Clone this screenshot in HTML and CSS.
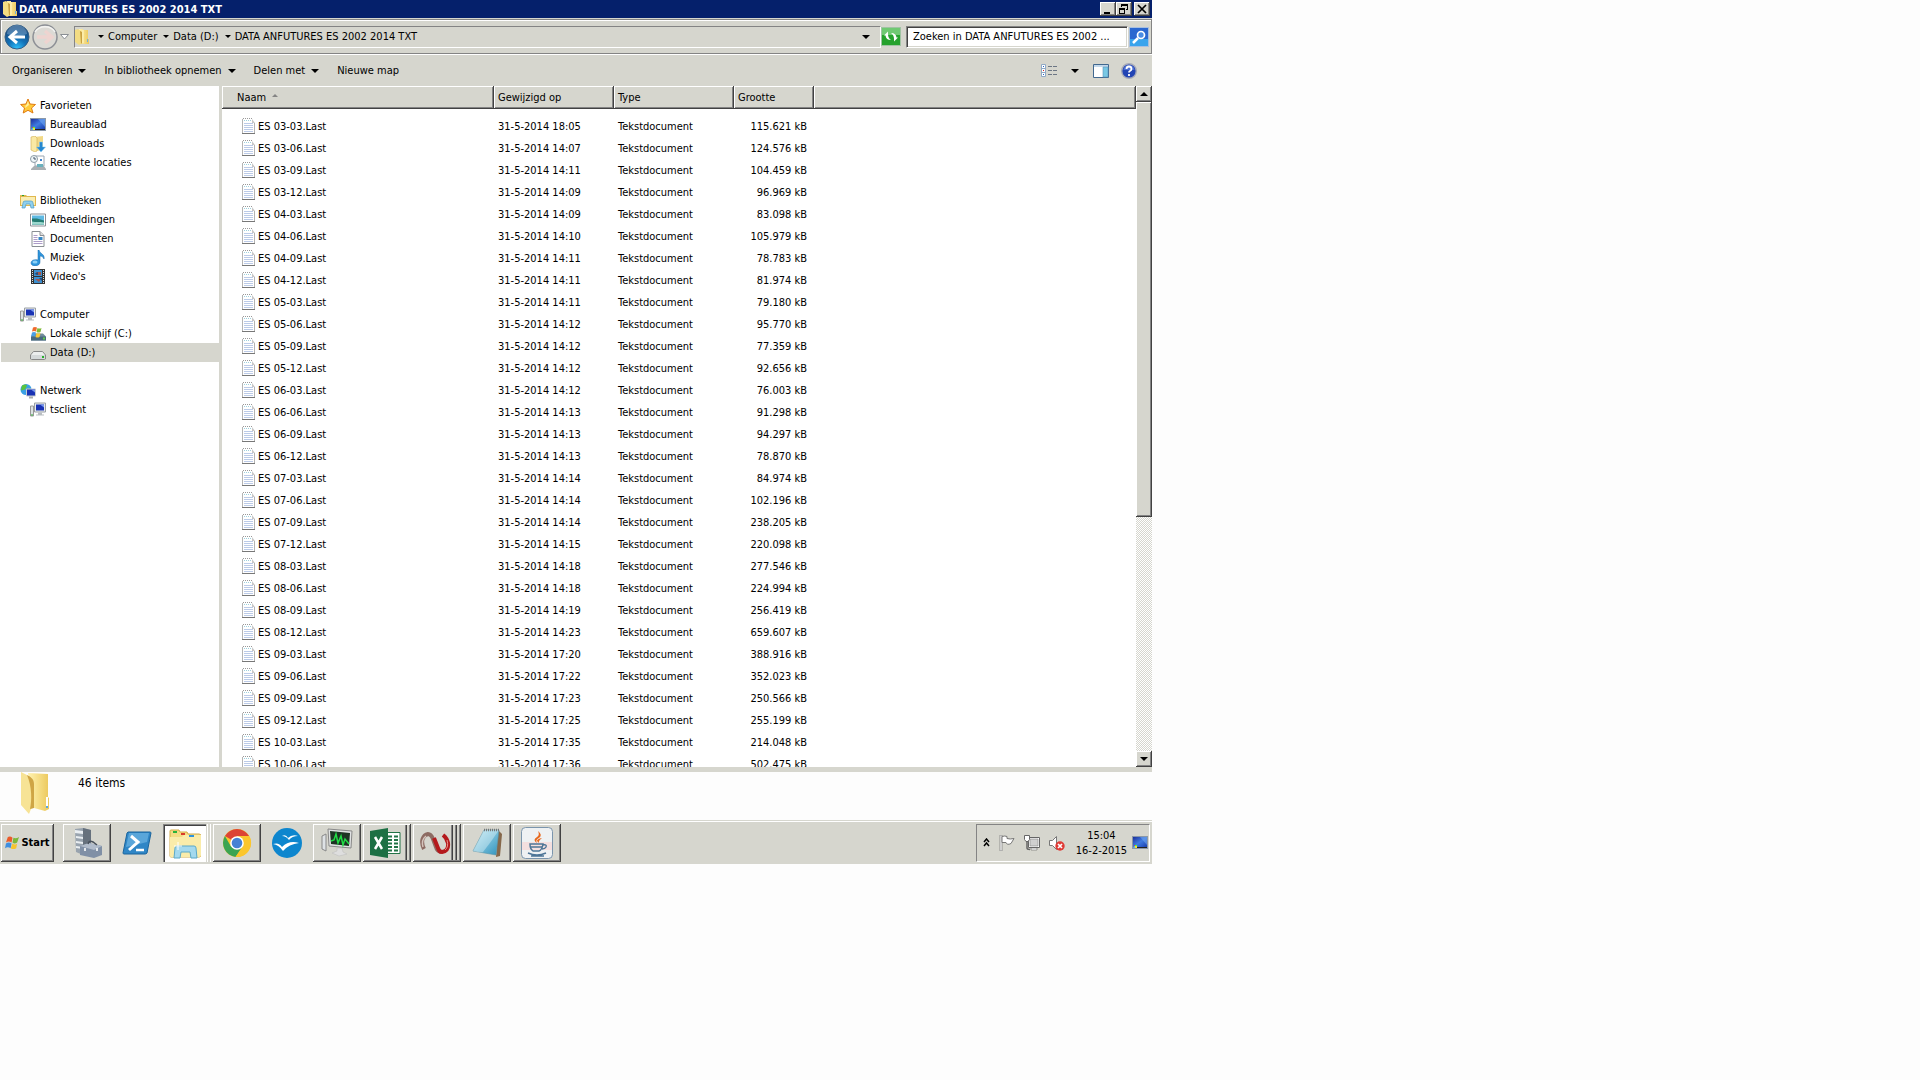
FILE: index.html
```
<!DOCTYPE html>
<html lang="nl">
<head>
    <meta charset="UTF-8">
    <title>DATA ANFUTURES ES 2002 2014 TXT</title>
    <link rel="stylesheet" href="styles.css">
</head>
<body>
<svg class="defs" aria-hidden="true">
    <defs>
        <linearGradient id="gBlue" x1="0" y1="0" x2="1" y2="1"><stop offset="0" stop-color="#1c2f9c"/><stop offset=".5" stop-color="#3f7be0"/><stop offset="1" stop-color="#1a3fb0"/></linearGradient>
        <linearGradient id="gFolder" x1="0" y1="0" x2="1" y2="0"><stop offset="0" stop-color="#fff3b0"/><stop offset="1" stop-color="#ecc85c"/></linearGradient>
        <radialGradient id="gBack" cx=".5" cy="1" r=".9"><stop offset="0" stop-color="#2fc4ff"/><stop offset=".45" stop-color="#1272b8"/><stop offset="1" stop-color="#1b4a7c"/></radialGradient>
        <linearGradient id="gGlass" x1="0" y1="0" x2="1" y2="1"><stop offset="0" stop-color="#bfe8f5"/><stop offset="1" stop-color="#2e93bd"/></linearGradient>
    </defs>
    <symbol id="folder" viewBox="0 0 28 42">
        <path d="M7 1l20 1v23l1 1v11l-4 2-11-3z" fill="url(#gFolder)"/>
        <path d="M0 0l6 3 4 4 2 29-2 1-2 5-8-9z" fill="#f7e395"/>
        <path d="M6 3c4 2 7 4 7 9v24l-4 1c2-9 2-22-3-34z" fill="#cfa545"/>
        <path d="M25 25h2v9h-2z" fill="#fff"/><path d="M25 34h2v2h-2z" fill="#5aa6e0"/>
    </symbol>
    <symbol id="folder-s" viewBox="0 0 14 16">
        <path d="M4 0h4v1h5v9h1v5H5z" fill="url(#gFolder)"/>
        <path d="M0 1l3-1 3 2v13l-2 1-4-3z" fill="#f3dc82"/><path d="M5 2l2 1v11l-1 1z" fill="#c9a040"/><path d="M8 1v13" stroke="#fff6c4"/>
        <path d="M12 10h1v3h-1z" fill="#6fb1e0"/>
    </symbol>
    <symbol id="doc" viewBox="0 0 13 16">
        <path d="M0 1h10l3 3v12H0z" fill="#fff"/>
        <path d="M.5 1v14M12.500 5v10" stroke="#b4b4b4"/>
        <path d="M1 .5h10" stroke="#999" stroke-dasharray="1 1"/><path d="M2 2.500h8" stroke="#9ed0dc" stroke-dasharray="1 1"/>
        <path d="M10 1l3 4h-3z" fill="#c8c8c8"/>
        <path d="M2 5.500h9M2 7.500h9M2 9.500h9M2 11.500h9M2 13.500h9" stroke="#bccbe8"/>
        <path d="M0 15.500h13" stroke="#777"/>
    </symbol>
    <symbol id="star" viewBox="0 0 16 16"><path d="M8 1l2 5 5.500.5-4 3.500 1.500 5L8 12.300 3.200 15l1.300-5L.6 6.500 6 6z" fill="#ffcb3a" stroke="#e07a10"/><path d="M8 3l1 4-4 3 .8-3L3 7h3.500z" fill="#fff0a0"/></symbol>
    <symbol id="desktop" viewBox="0 0 16 14"><path d="M0 0h16v13H0z" fill="#8b98a8"/><path d="M1 1h14v10H1z" fill="url(#gBlue)"/><path d="M5 11h10v1H5z" fill="#222"/><path d="M8 1h7v8z" fill="#7ab0f4" opacity=".5"/><path d="M2 9h1v1H2z" fill="#f33"/><path d="M3 9h2v1H3z" fill="#4f4"/><path d="M2 10h1v2H2z" fill="#3cf"/><path d="M3 10h2v2H3z" fill="#fd3"/></symbol>
    <symbol id="downloads" viewBox="0 0 16 16"><path d="M4 1l9-1v14l-7 1z" fill="#f2d987"/><path d="M1 1l4-1 2 2v13l-2 1-4-2z" fill="#fae9a4" stroke="#d0ac50" stroke-width=".6"/><path d="M9.500 6h3v5h3l-4.500 5-4.500-5h3z" fill="#2586d0" stroke="#7fc8f4" stroke-width=".5"/></symbol>
    <symbol id="recent" viewBox="0 0 16 16"><path d="M5 1h9v10H5z" fill="#fff" stroke="#9aa6b2"/><path d="M1 14l3-3h10l2 3v1H1z" fill="#a9afb3"/><path d="M7 9h6v3H7z" fill="#6ab1bd"/><path d="M10 4h2v2h-2z" fill="#3e83d0"/><circle cx="4" cy="4" r="3.500" fill="#eef5f8" stroke="#8d9ba5"/><path d="M4 2v2h2" fill="none" stroke="#456"/></symbol>
    <symbol id="library" viewBox="0 0 16 14"><path d="M0 1h6l1 1h9v10H0z" fill="#e0b84e"/><path d="M1 3h14v8H1z" fill="#faedb2"/><path d="M2 1h2v1H2z" fill="#28a030"/><path d="M2 14l1-5q0-2 2-2h6q2 0 2 2l1 5h-3l-1-4H6l-1 4z" fill="#8ed0ef" stroke="#4d9bc8" stroke-width=".7"/></symbol>
    <symbol id="pictures" viewBox="0 0 16 13"><path d="M.5.5h15v12H.5z" fill="#fff" stroke="#8a8f94"/><path d="M2 2h12v9H2z" fill="#5fb9e2"/><path d="M2 5h5l7 2v4H2z" fill="#267d72"/><path d="M2 8c4 1 7 0 12 1v2H2z" fill="#9bd8ce"/></symbol>
    <symbol id="documents" viewBox="0 0 13 16"><path d="M.5.5h8l4 4v11H.5z" fill="#fff" stroke="#8a8f94"/><path d="M8.500.5v4h4" fill="#ddd" stroke="#8a8f94"/><path d="M2 4.500h4M2 6.500h4M2 8.500h4M2 10.500h9M2 12.500h9" stroke="#ad9cc9"/><path d="M7 6h4v3H7z" fill="#3486c4"/></symbol>
    <symbol id="music" viewBox="0 0 14 16"><path d="M8 0c1 4 6 4 5 9-1-2-2-3-4-3v6c0 5-9 5-9 1 0-3 4-4 7-3V0z" fill="#2f96dc" stroke="#1868ac" stroke-width=".5"/><ellipse cx="4" cy="12" rx="2.500" ry="1.500" fill="#8cd1f7"/></symbol>
    <symbol id="video" viewBox="0 0 14 16"><path d="M0 0h14v15H0z" fill="#333"/><path d="M1.500 1v14M12.500 1v14" stroke="#ddd" stroke-dasharray="1 1"/><path d="M3 1h8v6H3zM3 8h8v6H3z" fill="#3c90d0"/><path d="M5 3h5v3H5zM4 10h6l-2 3z" fill="#a4584c"/><path d="M3 5l4-2v3zM8 9h3v3z" fill="#1a4e83"/></symbol>
    <symbol id="computer" viewBox="0 0 16 15"><path d="M.5 3.500h3v10h-3z" fill="#dde2e4" stroke="#999"/><path d="M1 12h2v1H1z" fill="#3a3"/><path d="M4.500.5h11v9h-11z" fill="#e8ebed" stroke="#9aa0a5"/><path d="M6 2h8v6H6z" fill="#1932b4"/><path d="M10 2h4v3z" fill="#7797ee"/><path d="M8 10h4v2h2v1H6v-1h2z" fill="#b8bdc1"/></symbol>
    <symbol id="drive-c" viewBox="0 0 16 15"><path d="M1 10l2-3h10l3 3v4H1z" fill="#728c9c"/><path d="M1 10h15v4H1z" fill="#48697e"/><path d="M13 11h2v2h-2z" fill="#5ed14a"/><path d="M3 1q2-1 4 0L6 5q-2-1-4 0z" fill="#ef6a2c"/><path d="M7.500 1.500q2 1 4 0l-1 4q-2 1-4 0z" fill="#7fba35"/><path d="M2 6q2-1 4 0l-1 4q-2-1-4 0z" fill="#4a9fe3"/><path d="M6.500 6.500q2 1 4 0l-1 4q-2 1-4 0z" fill="#f9c834"/></symbol>
    <symbol id="drive-d" viewBox="0 0 16 9"><path d="M.5 4l3-3.500h9l3 3.500v4l-1 .5h-13l-1-.5z" fill="#eceeee" stroke="#888"/><path d="M1 4h14v4H1z" fill="#d5d9da"/><path d="M12 5h2v2h-2z" fill="#29b02b"/></symbol>
    <symbol id="network" viewBox="0 0 16 15"><circle cx="6" cy="6" r="5.500" fill="#3aa0e6"/><path d="M2 2q4-2 5 0L5 6 1 7zM7 5h3L6 11z" fill="#5ac43c"/><path d="M6.500 5.500h9v7h-9z" fill="#1932b4" stroke="#c8ccd0"/><path d="M11 6h4v3z" fill="#7797ee"/><path d="M9 13h4v2H9z" fill="#a8adb1"/></symbol>
    <symbol id="flag4" viewBox="0 0 16 15"><path d="M3 1q3-1 5 1L7 7Q4 5 1 7z" fill="#ea5b2a"/><path d="M9 2q3 1 6-1l-2 6q-3 2-5 0z" fill="#7cb83a"/><path d="M1 8q3-2 6 0l-1 5q-3-2-6 0z" fill="#3f8fe0"/><path d="M8 8q3 2 5 0l-1 5q-3 2-6 0z" fill="#f7c42e"/></symbol>
</svg>

<div class="screen">
    <main class="window">
        <header class="titlebar">
            <svg class="title-icon"><use href="#folder-s"/></svg>
            <h1>DATA ANFUTURES ES 2002 2014 TXT</h1>
            <button class="win-btn" aria-label="Minimaliseren"><svg width="12" height="10"><path d="M2 8h6v2H2z"/></svg></button>
            <button class="win-btn" aria-label="Verkleinen"><svg width="12" height="10"><path d="M3 0h7v6H8V5h1V2H4v1H3zM1 4h6v6H1zM2 6v3h4V6z" fill-rule="evenodd"/></svg></button>
            <button class="win-btn close" aria-label="Sluiten"><svg width="12" height="10"><path d="M2 1l8 8M10 1L2 9" stroke="#000" stroke-width="1.700"/></svg></button>
        </header>

        <div class="addressbar">
            <button class="nav-btn" aria-label="Vorige"><svg width="26" height="26"><circle cx="13" cy="13" r="12" fill="url(#gBack)" stroke="#355f86"/><path d="M3 10a10 9 0 0 1 20 0q-10 4-20 0z" fill="#8fb4d6" opacity=".45"/><path d="M13 7l-7 6 7 6M7 13h14" fill="none" stroke="#fff" stroke-width="3"/></svg></button>
            <button class="nav-btn" aria-label="Volgende"><svg width="26" height="26"><circle cx="13" cy="13" r="12" fill="#dcdad5" stroke="#8d9096" stroke-width="1.500"/><path d="M13 7l7 6-7 6M19 13H5" fill="none" stroke="#eed4d0" stroke-width="3.500"/><path d="M3 8a11 9 0 0 1 20 0" fill="none" stroke="#f4f4f2" stroke-width="1.500"/></svg></button>
            <button class="history" aria-label="Recente pagina's"><svg width="9" height="6"><path d="M.5.5h8l-4 4.500z" fill="#fff" stroke="#8a8f94"/></svg></button>
            <nav class="breadcrumb">
                <svg class="crumb-icon"><use href="#folder-s"/></svg>
                <i class="arrow"></i>
                <a href="#">Computer</a><i class="arrow"></i>
                <a href="#">Data (D:)</a><i class="arrow"></i>
                <a href="#">DATA ANFUTURES ES 2002 2014 TXT</a>
                <button class="plain drop" aria-label="Vorige locaties"><i class="arrow big"></i></button>
            </nav>
            <button class="plain refresh" aria-label="Vernieuwen"><svg width="20" height="19"><path d="M.5.5h19v18H.5z" fill="#26a22d" stroke="#9fc3a2"/><path d="M1 1h18v7H1z" fill="#6fc972"/><path d="M3 8.500l4-4v2.500q0 4 3 6-5 0-5.500-4.500zM17 10.500l-4 4V12q0-4-3-6 5 0 5.500 4.500z" fill="#fff"/></svg></button>
            <input class="search" type="text" aria-label="Zoeken" value="Zoeken in DATA ANFUTURES ES 2002 ...">
            <button class="plain" aria-label="Zoeken"><svg width="20" height="20"><path d="M.5.5h19v19H.5z" fill="#2b68d0" stroke="#a8c0e0"/><path d="M1 12h18v7H1z" fill="#39a4ec"/><circle cx="12" cy="8" r="3.500" fill="#4a8ce4" stroke="#fff" stroke-width="1.700"/><path d="M9 11l-5 5" stroke="#fff" stroke-width="2.500"/></svg></button>
        </div>

        <div class="toolbar">
            <button class="plain">Organiseren <i class="arrow big"></i></button>
            <button class="plain">In bibliotheek opnemen <i class="arrow big"></i></button>
            <button class="plain">Delen met <i class="arrow big"></i></button>
            <button class="plain">Nieuwe map</button>
            <div class="tools">
                <button class="plain view" aria-label="Weergave"><svg width="16" height="14"><path d="M.5.5h4v12h-4z" fill="#fff" stroke="#8fa9c6"/><path d="M0 4.500h5M0 8.500h5" stroke="#8fa9c6"/><path d="M2 2h1v1H2zM2 10h1v1H2z" fill="#26c"/><path d="M2 6h1v1H2z" fill="#c22"/><path d="M7 2.500h9M7 6.500h9M7 10.500h9" stroke="#6c7684" stroke-dasharray="4 1"/></svg><i class="arrow big"></i></button>
                <button class="plain" aria-label="Voorbeeldvenster"><svg width="16" height="14"><path d="M.5.5h15v13H.5z" fill="#fff" stroke="#41688f"/><path d="M1 1h14v2H1z" fill="#c3d8ea"/><path d="M10 3h5v10h-5z" fill="#78c8e4" stroke="#5a94b8" stroke-width=".6"/></svg></button>
                <button class="plain" aria-label="Help"><svg width="16" height="16"><circle cx="8" cy="8" r="7.300" fill="#2244b4" stroke="#a5a9b8" stroke-width="1.400"/><path d="M2.500 7a5.500 5 0 0 1 11 0z" fill="#6c90e8" opacity=".6"/><path d="M5.500 6q0-2.500 2.500-2.500T10.500 6q0 1-1.300 1.700Q8 8.300 8 9.500M8 11v2" fill="none" stroke="#fff" stroke-width="1.800"/></svg></button>
            </div>
        </div>

        <div class="content">
            <nav class="sidebar">
                <ul>
                    <li><a class="head" href="#"><svg><use href="#star"/></svg>Favorieten</a></li>
                    <li><a href="#"><svg><use href="#desktop"/></svg>Bureaublad</a></li>
                    <li><a href="#"><svg><use href="#downloads"/></svg>Downloads</a></li>
                    <li><a href="#"><svg><use href="#recent"/></svg>Recente locaties</a></li>
                </ul>
                <ul>
                    <li><a class="head" href="#"><svg><use href="#library"/></svg>Bibliotheken</a></li>
                    <li><a href="#"><svg><use href="#pictures"/></svg>Afbeeldingen</a></li>
                    <li><a href="#"><svg><use href="#documents"/></svg>Documenten</a></li>
                    <li><a href="#"><svg><use href="#music"/></svg>Muziek</a></li>
                    <li><a href="#"><svg><use href="#video"/></svg>Video's</a></li>
                </ul>
                <ul>
                    <li><a class="head" href="#"><svg><use href="#computer"/></svg>Computer</a></li>
                    <li><a href="#"><svg><use href="#drive-c"/></svg>Lokale schijf (C:)</a></li>
                    <li><a class="selected" href="#"><svg class="low"><use href="#drive-d"/></svg>Data (D:)</a></li>
                </ul>
                <ul>
                    <li><a class="head" href="#"><svg><use href="#network"/></svg>Netwerk</a></li>
                    <li><a href="#"><svg><use href="#computer"/></svg>tsclient</a></li>
                </ul>
            </nav>

            <section class="files">
                <table>
                    <colgroup><col class="c-name"><col class="c-date"><col class="c-type"><col class="c-size"><col></colgroup>
                    <thead>
                        <tr><th>Naam <i class="sort"></i></th><th>Gewijzigd op</th><th>Type</th><th>Grootte</th><th></th></tr>
                    </thead>
                    <tbody id="rows"></tbody>
                </table>
            </section>

            <div class="scrollbar">
                <button class="scroll-btn" aria-label="Omhoog"><i class="arrow big up"></i></button>
                <div class="track"><div class="thumb"></div></div>
                <button class="scroll-btn" aria-label="Omlaag"><i class="arrow big"></i></button>
            </div>
        </div>

        <footer class="details">
            <svg class="details-icon"><use href="#folder"/></svg>
            <p>46 items</p>
        </footer>
    </main>

    <div class="taskbar">
        <button class="start"><svg><use href="#flag4"/></svg>Start</button>
        <div class="tasks">
            <button class="task" aria-label="Serverbeheer"><svg viewBox="0 0 32 32"><path d="M4 2l8-1 8 2v22l-8 3-7-3z" fill="#98a3ae"/><path d="M12 1l8 2v22l-8 3z" fill="#66717d"/><path d="M4 3l8 1v3L4 6zM5 9l7 1v2L5 11zM5 14l7 1v2l-7-1zM5 19l7 1v2l-7-1z" fill="#e9eef2"/><path d="M9 19l9-3 13 3v9l-8 3-14-3z" fill="#8090a6"/><path d="M9 19l9-3 13 3-8 4z" fill="#b1bccb"/><path d="M17 17q1-4 5-2l4 3" fill="none" stroke="#48515c" stroke-width="1.500"/><path d="M14 21v3M26 21v3" stroke="#e4e8ec" stroke-width="2"/></svg></button>
            <button class="task flat" aria-label="PowerShell"><svg viewBox="0 0 32 32"><path d="M7 5h22q1 0 1 1l-4 20q-1 1-2 1H3q-1 0-1-1L6 6z" fill="#2f86c6" stroke="#1b659d"/><path d="M8 6h20l-2 9Q15 18 5 20z" fill="#78bce8" opacity=".6"/><path d="M10 9l7 6-9 8" fill="none" stroke="#fff" stroke-width="3"/><path d="M15 23h8" stroke="#fff" stroke-width="2.500"/></svg></button>
            <button class="task stack-1 pressed" aria-label="Verkenner"><svg viewBox="0 0 32 32"><path d="M1 4q0-1 1-1h8l1 2h7l1 2h11q2 0 2 2v19q0 2-2 2H2q-1 0-1-1z" fill="#f4dc84" stroke="#d2ab49"/><path d="M1 10h12l2-2h17v20q0 2-2 2H2q-1 0-1-1z" fill="#faecaa"/><path d="M4 4h4v2H4z" fill="#29b33b"/><path d="M12 6h4v2h-4z" fill="#da3a2c"/><path d="M20 8h5v2h-5z" fill="#2f93dd"/><path d="M5 31l1-10q0-2 2-2h17q2 0 2 2l1 10h-6l-1-6h-9l-1 6z" fill="#a4d9ee" stroke="#5ba9c9"/><path d="M9 15v8M5 19h8" stroke="#fff"/></svg></button>
            <button class="task" aria-label="Chrome"><svg viewBox="0 0 32 32"><circle cx="16" cy="16" r="14" fill="#fbc62d"/><path d="M16 16L3.900 9A14 14 0 0 1 28.100 9H16z" fill="#dc4335"/><path d="M16 16l-6 3.500L3.900 9a14 14 0 0 0 10.600 20.900L22 19z" fill="#3ba452"/><path d="M16 9h12.100a14 14 0 0 1-13.600 20.900L22 19z" fill="#fbc62d"/><circle cx="16" cy="16" r="6.800" fill="#fff"/><circle cx="16" cy="16" r="5.300" fill="#4581d4"/></svg></button>
            <button class="task flat" aria-label="OpenOffice"><svg viewBox="0 0 32 32"><circle cx="16" cy="16" r="15" fill="#0d86ce"/><path d="M11 9q4-2 6 2 4-4 10-2-6 0-9 4-3-4-7-4zM2 17q6-2 9 3 7-7 17-4-10 1-16 8-4-6-10-7z" fill="#fff"/></svg></button>
            <button class="task" aria-label="Prestaties"><svg viewBox="0 0 32 32"><path d="M1 9l4-2v17l-4-2z" fill="#dee2e5" stroke="#888"/><path d="M7 2l24 2-1 17-22-2z" fill="#e0e2e3" stroke="#888"/><path d="M9 4l20 2-1 13-18-2z" fill="#1d3323"/><path d="M10 14l3-1 2-6 2 9 3-7 2 9 2-6 4 5" fill="none" stroke="#21dc45" stroke-width="1.500"/><path d="M16 21h5l1 4 4 2-8 2-7-3 5-2z" fill="#dedede" stroke="#bbb" stroke-width=".5"/></svg></button>
            <button class="task stack-1" aria-label="Excel"><svg viewBox="0 0 32 32"><path d="M17 5.500h14v21H17z" fill="#fff" stroke="#217346"/><path d="M19 9.500h10M19 13h10M19 16.500h10M19 20h10M19 23.500h10" stroke="#217346" stroke-width="2" stroke-dasharray="4 2"/><path d="M1 4l18-3v30L1 28z" fill="#1d7044"/><path d="M6 10l7 12M13 10L6 22" stroke="#fff" stroke-width="2.500"/></svg></button>
            <button class="task stack-2" aria-label="NinjaTrader"><svg viewBox="0 0 32 32"><path d="M5 22C1 14 4 8 9 7q3 0 5 5l3 8q1 4 5 5" fill="none" stroke="#8d6b62" stroke-width="4"/><path d="M4 20q-2-7 3-11" fill="none" stroke="#d5c4bc" stroke-width="1.500"/><path d="M15 11l4 10q1 4 4 4 7-1 6-9-1-5-5-8" fill="none" stroke="#b4191c" stroke-width="4"/><path d="M28 13q2 7-2 10" fill="none" stroke="#e88c84"/></svg></button>
            <button class="task" aria-label="Kladblok"><svg viewBox="0 0 32 32"><path d="M27 3l4 4-2 22-4 1z" fill="#85684b"/><path d="M13 3h15l-3 25-23-4z" fill="url(#gGlass)" stroke="#5b93a8" stroke-width=".6"/><path d="M13 3L2 24q8 2 10 1Q20 15 28 3z" fill="#e9f8fb" opacity=".4"/><path d="M13 3h15" stroke="#777" stroke-width="2.500" stroke-dasharray="1 1"/></svg></button>
            <button class="task" aria-label="Java"><svg viewBox="0 0 32 32"><rect x=".5" y=".5" width="31" height="31" rx="4" fill="#eef1f3" stroke="#7b95ad"/><path d="M1 15h30v8H1z" fill="#f4dfdf"/><path d="M16 16q-5-3 0-6 3-2 1-6 5 4 1 7-4 2-2 5zM18 16q-1-2 3-5-5 1-5 3z" fill="#e8681d"/><path d="M9 17h13q-1 6-4 7h-6q-3-2-3-7zM22 18q4-1 3 2-1 2-4 2" fill="none" stroke="#4d7597" stroke-width="1.500"/><path d="M10 20h11M7 26q9 4 18 0M10 29h13" fill="none" stroke="#4d7597" stroke-width="1.500"/></svg></button>
        </div>
        <div class="tray">
            <button class="plain" aria-label="Meer pictogrammen"><svg width="7" height="9"><path d="M1 4l2.500-3L6 4M1 8l2.500-3L6 8" fill="none" stroke="#000" stroke-width="1.500"/></svg></button>
            <svg class="tray-icon" viewBox="0 0 16 16"><path d="M1 0h2v16H1z" fill="#fff" stroke="#777" stroke-width=".7"/><path d="M3 1.500q3-1 5 0v2q3 1 7 0l-3 5q-4 2-5-1H3z" fill="#fff" stroke="#777"/></svg>
            <svg class="tray-icon" viewBox="0 0 16 16"><path d="M4.500 2.500h11v10h-11z" fill="#fff" stroke="#666"/><path d="M6 4h8v7H6z" fill="#cfcfcf" stroke="#888" stroke-width=".6"/><path d="M7 13h6v2H7z" fill="#fff" stroke="#666" stroke-width=".6"/><path d="M.5.5h5v4l-1.500 2h-2L.5 4.500z" fill="#fff" stroke="#666"/><path d="M3 6v7q0 1.500 3 1.500" fill="none" stroke="#666" stroke-width="1.500"/></svg>
            <svg class="tray-icon" viewBox="0 0 16 16"><path d="M.5 5.500h3l4-4v13l-4-4h-3z" fill="#fff" stroke="#777"/><circle cx="11" cy="11" r="4.700" fill="#e03a35"/><path d="M9 9l4 4M13 9l-4 4" stroke="#fff" stroke-width="1.700"/></svg>
            <div class="clock"><span>15:04</span><span>16-2-2015</span></div>
            <svg class="tray-icon"><use href="#desktop"/></svg>
        </div>
    </div>
</div>

<script src="script.js"></script>
</body>
</html>
```
FILE: styles.css
```
* {
    box-sizing: border-box;
}

body {
    margin: 0;
    background: #fdfdfd;
    color: #000;
    font-family: "DejaVu Sans Condensed", "DejaVu Sans", sans-serif;
    font-size: 11px;
    line-height: 15px;
}

a {
    color: inherit;
    text-decoration: none;
}

button {
    font: inherit;
    color: inherit;
    padding: 0;
    border: none;
}

svg {
    display: block;
    flex: none;
}

.defs {
    position: absolute;
    width: 0;
    height: 0;
}

.screen {
    display: flex;
    flex-direction: column;
    width: 60%;
    height: 80vh;
    background: #d6d6ce;
}

.window {
    display: flex;
    flex-direction: column;
    flex: 1;
    min-height: 0;
}

/* raised 3D edge */
.win-btn,
.scroll-btn,
.thumb,
.start,
.task {
    background: #d6d6ce;
    box-shadow: inset -1px -1px #424242, inset 1px 1px #fff, inset -2px -2px #848484;
}

.plain {
    display: flex;
    align-items: center;
    background: none;
}

.arrow {
    display: inline-block;
    flex: none;
    border: 3px solid transparent;
    border-top-color: #000;
    border-bottom: none;
}

.arrow.big {
    border-width: 4px;
    border-bottom: none;
}

.arrow.up {
    transform: rotate(180deg);
}

/* title bar */
.titlebar {
    display: flex;
    align-items: center;
    height: 18px;
    padding: 0 2px 0 3px;
    background: #05206b;
    color: #fff;
}

.title-icon {
    width: 14px;
    height: 16px;
}

.titlebar h1 {
    flex: 1;
    margin: 0;
    padding-left: 2px;
    font-size: 11px;
}

.win-btn {
    display: flex;
    align-items: center;
    justify-content: center;
    width: 16px;
    height: 14px;
}

.win-btn.close {
    margin-left: 2px;
}

/* address bar */
.addressbar {
    display: flex;
    align-items: center;
    height: 35px;
    margin: 1px 0;
    padding: 0 2px 0 3px;
    border: 1px solid #848484;
    box-shadow: inset 1px 1px #fff, 0 1px #fff;
}

.nav-btn {
    background: none;
    width: 26px;
    height: 26px;
    margin-right: 2px;
    border-radius: 50%;
}

.history {
    background: none;
    padding-right: 5px;
}

.breadcrumb {
    display: flex;
    align-items: center;
    flex: 1;
    height: 22px;
    border: 1px solid;
    border-color: #848484 #fff #fff #848484;
}

.crumb-icon {
    width: 14px;
    height: 16px;
    margin-right: 9px;
}

.breadcrumb a {
    padding: 0 6px 0 4px;
}

.drop {
    margin-left: auto;
    padding: 0 10px;
}

.refresh {
    margin-right: 5px;
}

.search {
    width: 222px;
    height: 22px;
    margin-right: 1px;
    padding: 0 6px;
    border: 1px solid;
    border-color: #848484 #fff #fff #848484;
    box-shadow: inset 1px 1px #424242, inset -1px -1px #d6d6ce;
    background: #fff;
    color: #000;
    font: inherit;
}

/* command bar */
.toolbar {
    display: flex;
    align-items: center;
    gap: 18px;
    height: 31px;
    padding: 0 15px 0 12px;
}

.toolbar .plain {
    gap: 6px;
}

.tools {
    display: flex;
    align-items: center;
    gap: 12px;
    margin-left: auto;
}

.tools .view {
    gap: 14px;
    padding-right: 2px;
}

/* content */
.content {
    display: flex;
    flex: 1;
    min-height: 0;
    background: #fff;
}

.sidebar {
    width: 222px;
    padding: 10px 0 0 1px;
    border-right: 3px solid #d6d6ce;
}

.sidebar ul {
    list-style: none;
    margin: 0 0 19px;
    padding: 0;
}

.sidebar a {
    display: flex;
    align-items: center;
    gap: 4px;
    height: 19px;
    padding-left: 29px;
}

.sidebar a.head {
    padding-left: 19px;
}

.sidebar a.selected {
    background: #d6d6ce;
}

.sidebar svg {
    width: 16px;
    height: 16px;
}

.sidebar svg.low {
    height: 9px;
    margin-top: 6px;
}

.files {
    flex: 1;
    min-width: 0;
    overflow: hidden;
}

table {
    width: 100%;
    table-layout: fixed;
    border-collapse: separate;
    border-spacing: 0;
}

.c-name {
    width: 272px;
}

.c-date,
.c-type {
    width: 120px;
}

.c-size {
    width: 80px;
}

th,
td {
    padding: 0 4px;
    text-align: left;
    font-weight: normal;
    white-space: nowrap;
}

th {
    height: 23px;
    background: #d6d6ce;
    box-shadow: inset -1px -1px #424242, inset 1px 1px #fff, inset -2px -2px #848484;
}

th:first-child {
    padding-left: 15px;
}

.sort {
    display: inline-block;
    margin: 0 0 4px 3px;
    border: 3px solid transparent;
    border-top: none;
    border-bottom-color: #848484;
}

/* space between header and first row */
tbody::before {
    content: "";
    display: block;
    height: 6px;
}

td {
    height: 22px;
}

td:first-child {
    padding-left: 20px;
}

td:nth-child(4) {
    padding-right: 7px;
    text-align: right;
}

.file {
    display: flex;
    align-items: center;
    gap: 3px;
}

.file svg {
    width: 13px;
    height: 16px;
}

/* scrollbar */
.scrollbar {
    display: flex;
    flex-direction: column;
    width: 16px;
}

.scroll-btn {
    display: flex;
    align-items: center;
    justify-content: center;
    height: 16px;
}

.track {
    flex: 1;
    background: repeating-conic-gradient(#d6d6ce 0 25%, #fff 0 50%) 0 0 / 2px 2px;
}

.thumb {
    height: 64%;
}

/* details pane */
.details {
    display: flex;
    gap: 29px;
    height: 53px;
    padding-left: 21px;
    border-top: 5px solid #d6d6ce;
    background: #fdfdfd;
}

.details-icon {
    width: 28px;
    height: 42px;
}

.details p {
    margin: 4px 0;
    font-size: 12px;
}

/* taskbar */
.taskbar {
    display: flex;
    align-items: center;
    height: 44px;
    padding: 0 2px 0 1px;
    border-top: 1px solid #d6d6ce;
    box-shadow: inset 0 1px #fff;
}

.start {
    display: flex;
    align-items: center;
    justify-content: center;
    gap: 1px;
    width: 53px;
    height: 38px;
    font-weight: bold;
}

.start svg {
    width: 15px;
    height: 14px;
}

.tasks {
    display: flex;
    gap: 2px;
    flex: 1;
    padding-left: 9px;
}

.task {
    display: flex;
    align-items: center;
    justify-content: center;
    width: 48px;
    height: 38px;
}

.task svg {
    width: 32px;
    height: 32px;
}

.task.flat {
    background: none;
    box-shadow: none;
}

/* grouped windows show extra edges on the right */
.stack-1,
.stack-2 {
    justify-content: flex-start;
    padding-left: 6px;
}

.stack-1 {
    box-shadow: inset -1px -1px #424242, inset 1px 1px #fff, inset -2px -2px #848484,
        inset -4px 0 #d6d6ce, inset -5px 0 #424242, inset -6px 0 #848484;
}

.stack-2 {
    box-shadow: inset -1px -1px #424242, inset 1px 1px #fff, inset -2px -2px #848484,
        inset -4px 0 #d6d6ce, inset -5px 0 #424242, inset -6px 0 #848484,
        inset -8px 0 #d6d6ce, inset -9px 0 #424242, inset -10px 0 #848484;
}

.task.pressed {
    background: #fff;
    box-shadow: inset -1px 0 #fff, inset -3px 0 #d6d6ce, inset -4px 0 #fff, inset -5px 0 #d6d6ce,
        inset 1px 1px #848484, inset 2px 2px #424242;
}

.tray {
    display: flex;
    align-items: center;
    gap: 9px;
    height: 38px;
    padding: 0 1px 0 6px;
    border: 1px solid;
    border-color: #848484 #fff #fff #848484;
}

.tray-icon {
    width: 16px;
    height: 16px;
}

.clock {
    display: flex;
    flex-direction: column;
    padding-left: 2px;
    margin-right: -4px;
    text-align: center;
}
```
FILE: script.js
```
const files = [
    ['03-03', '18:05', '115.621'], ['03-06', '14:07', '124.576'], ['03-09', '14:11', '104.459'],
    ['03-12', '14:09', '96.969'], ['04-03', '14:09', '83.098'], ['04-06', '14:10', '105.979'],
    ['04-09', '14:11', '78.783'], ['04-12', '14:11', '81.974'], ['05-03', '14:11', '79.180'],
    ['05-06', '14:12', '95.770'], ['05-09', '14:12', '77.359'], ['05-12', '14:12', '92.656'],
    ['06-03', '14:12', '76.003'], ['06-06', '14:13', '91.298'], ['06-09', '14:13', '94.297'],
    ['06-12', '14:13', '78.870'], ['07-03', '14:14', '84.974'], ['07-06', '14:14', '102.196'],
    ['07-09', '14:14', '238.205'], ['07-12', '14:15', '220.098'], ['08-03', '14:18', '277.546'],
    ['08-06', '14:18', '224.994'], ['08-09', '14:19', '256.419'], ['08-12', '14:23', '659.607'],
    ['09-03', '17:20', '388.916'], ['09-06', '17:22', '352.023'], ['09-09', '17:23', '250.566'],
    ['09-12', '17:25', '255.199'], ['10-03', '17:35', '214.048'], ['10-06', '17:36', '502.475']
];

document.getElementById('rows').innerHTML = files.map(([name, time, size]) => `
    <tr>
        <td><div class="file"><svg><use href="#doc"/></svg>ES ${name}.Last</div></td>
        <td>31-5-2014 ${time}</td>
        <td>Tekstdocument</td>
        <td>${size} kB</td>
        <td></td>
    </tr>`).join('');
```
